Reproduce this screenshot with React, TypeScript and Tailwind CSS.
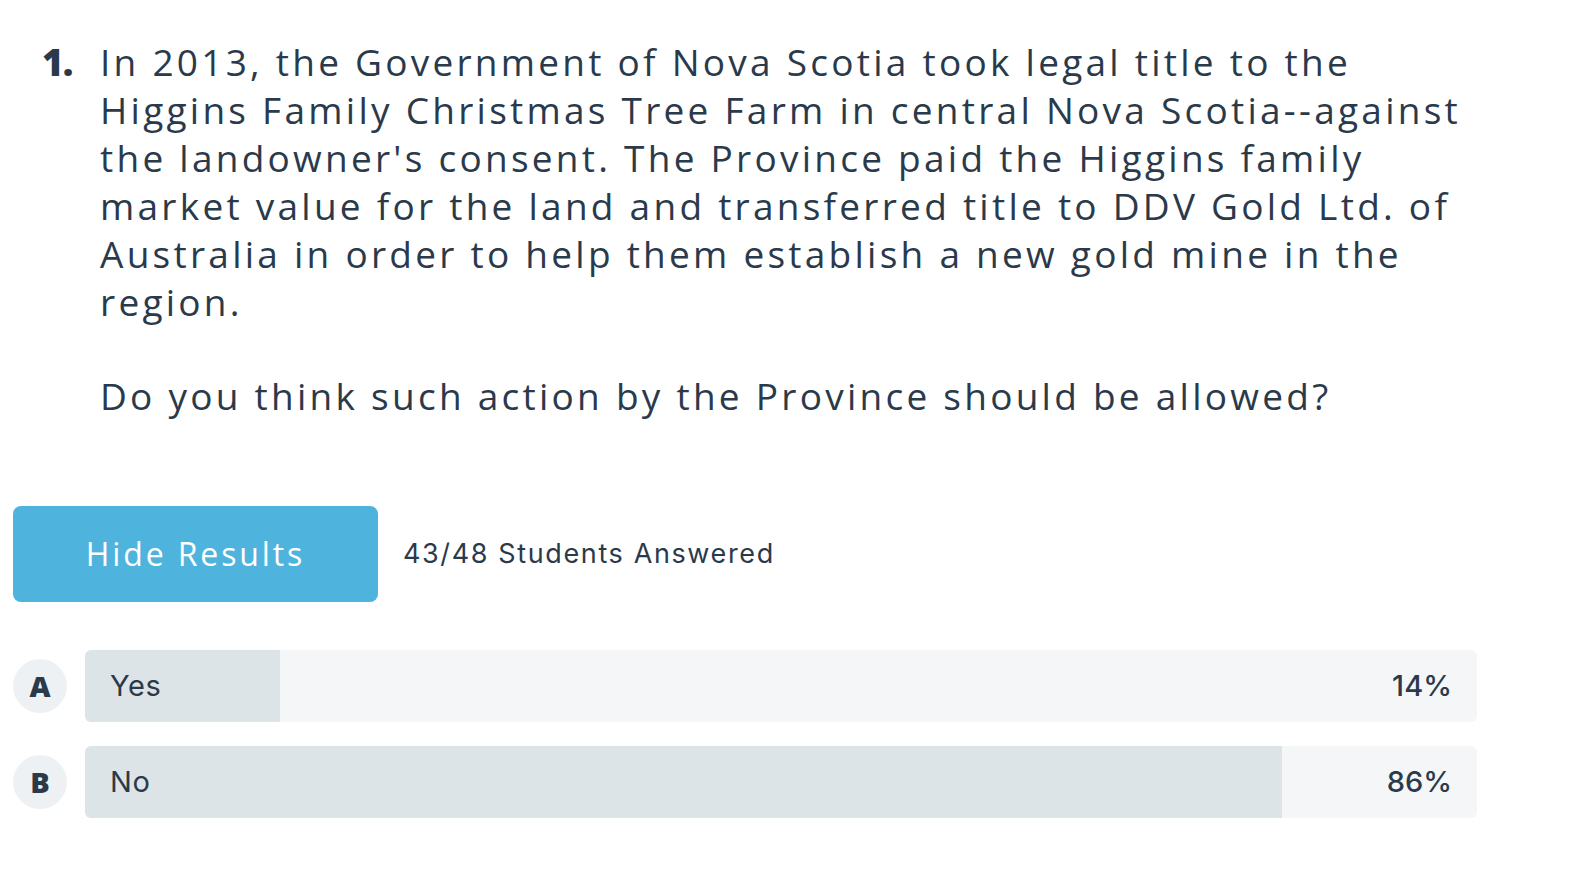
import React from "react";

type Choice = {
  letter: string;
  label: string;
  percent: number;
};

const choices: Choice[] = [
  { letter: "A", label: "Yes", percent: 14 },
  { letter: "B", label: "No", percent: 86 },
];

const ResultRow = ({ choice }: { choice: Choice }) => {
  return (
    <div className="flex items-center gap-[18px]">
      <div className="w-[54px] h-[54px] shrink-0 rounded-full bg-[#eef1f4] flex items-center justify-center text-[29px] font-extrabold text-[#2b3a4a] font-['Open_Sans',sans-serif]">
        {choice.letter}
      </div>
      <div className="relative flex-1 h-[72px] rounded-md bg-[#f4f6f8] overflow-hidden">
        <div
          className="absolute left-0 top-0 bottom-0 bg-[#dde4e8]"
          style={{ width: `${choice.percent}%` }}
        />
        <div className="relative h-full flex items-center justify-between pl-[25px] pr-[25px] text-[29px] tracking-[0.02em] text-[#2b3a4a] font-['Inter',sans-serif]">
          <span>{choice.label}</span>
          <span className="font-medium tracking-normal">{choice.percent}%</span>
        </div>
      </div>
    </div>
  );
};

export default function App() {
  return (
    <div className="min-h-screen bg-white pl-[13px] pr-[113px] pt-[38px] text-[#2a3a4b]">
      <div className="flex pl-[29px] font-['Open_Sans',sans-serif] text-[37px] leading-[48px] font-medium tracking-[0.088em]">
        <div className="w-[58px] shrink-0 font-extrabold tracking-tight">1.</div>
        <div className="whitespace-nowrap">
          <p>
            In 2013, the Government of Nova Scotia took legal title to the
            <br />
            Higgins Family Christmas Tree Farm in central Nova Scotia--against
            <br />
            the landowner's consent. The Province paid the Higgins family
            <br />
            market value for the land and transferred title to DDV Gold Ltd. of
            <br />
            Australia in order to help them establish a new gold mine in the
            <br />
            region.
          </p>
          <p className="mt-[46px]">Do you think such action by the Province should be allowed?</p>
        </div>
      </div>

      <div className="mt-[86px] flex items-center gap-[25px]">
        <button className="w-[365px] h-[96px] rounded-lg bg-[#4eb4de] text-white text-[32px] font-medium font-['Open_Sans',sans-serif] tracking-[0.09em]">
          Hide Results
        </button>
        <span className="text-[27px] tracking-[0.06em] font-['Inter',sans-serif] text-[#2a3a4b]">
          43/48 Students Answered
        </span>
      </div>

      <div className="mt-[48px] flex flex-col gap-6">
        {choices.map((c) => (
          <ResultRow key={c.letter} choice={c} />
        ))}
      </div>
    </div>
  );
}
